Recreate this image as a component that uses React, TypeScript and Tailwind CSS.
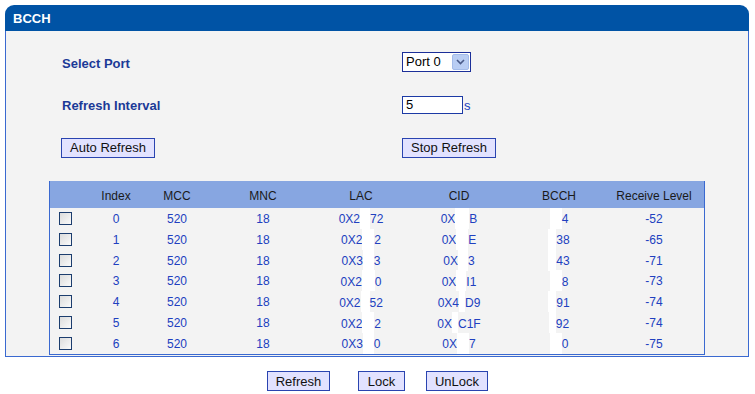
import React from "react";

type Row = {
  idx: number;
  lac: [string, string, number];
  cid: [string, string, number];
  bcch: [string, string, number];
  level: string;
};

// values partly blanked out in the capture: [before, after, gap width]
const ROWS: Row[] = [
  { idx: 0, lac: ["0X2", "72", 10], cid: ["0X", "B", 14], bcch: ["", "4", 12], level: "-52" },
  { idx: 1, lac: ["0X2", "2", 12], cid: ["0X", "E", 12], bcch: ["", "38", 8], level: "-65" },
  { idx: 2, lac: ["0X3", "3", 11], cid: ["0X", "3", 10], bcch: ["", "43", 8], level: "-71" },
  { idx: 3, lac: ["0X2", "0", 13], cid: ["0X", "I1", 10], bcch: ["", "8", 12], level: "-73" },
  { idx: 4, lac: ["0X2", "52", 9], cid: ["0X4", "D9", 6], bcch: ["", "91", 8], level: "-74" },
  { idx: 5, lac: ["0X2", "2", 12], cid: ["0X", "C1F", 6], bcch: ["", "92", 7], level: "-74" },
  { idx: 6, lac: ["0X3", "0", 11], cid: ["0X", "7", 12], bcch: ["", "0", 12], level: "-75" },
];

function Masked({ v }: { v: [string, string, number] }) {
  return (
    <span className="inline-flex items-center h-[21px]">
      <span className="pt-[2px]">{v[0]}</span>
      <span className="inline-block h-[21px] bg-white" style={{ width: v[2] }} />
      <span className="pt-[2px]">{v[1]}</span>
    </span>
  );
}

function Btn({ label, w }: { label: string; w: string }) {
  return (
    <button
      className={`h-[20px] ${w} border border-[#2a44b0] bg-[#e2e2ff] text-[13px] leading-none text-[#111] flex items-center justify-center`}
    >
      {label}
    </button>
  );
}

export default function App() {
  return (
    <div className="w-[755px] h-[394px] bg-white font-['Liberation_Sans',Arial,sans-serif] pt-[5px] pl-[5px]">
      <div className="w-[744px]">
        <div className="h-[26px] bg-[#0053a5] rounded-t-[9px] flex items-center pl-[8px] pt-[1px]">
          <span className="text-white text-[13px] font-bold">BCCH</span>
        </div>
        <div className="h-[326px] bg-[#f3f3f3] border-x border-b border-[#3a69d0] pt-[21px]">
          <div className="flex items-center h-[20px]">
            <div className="w-[396px] pl-[56px] pt-[3px] text-[13px] font-bold text-[#1b3a97]">Select Port</div>
            <div className="w-[69px] h-[20px] border border-[#1c2f99] bg-white flex items-center justify-between pl-[3px] pr-[1px]">
              <span className="text-[13px] text-black">Port 0</span>
              <span className="w-[17px] h-[16px] bg-[#b9cdf3] border border-[#a3bbe9] rounded-[2px] flex items-center justify-center">
                <svg width="9" height="6" viewBox="0 0 9 6">
                  <path d="M1 1 L4.5 4.5 L8 1" stroke="#4a5a88" strokeWidth="1.6" fill="none" />
                </svg>
              </span>
            </div>
          </div>
          <div className="flex items-center h-[18px] mt-[24px]">
            <div className="w-[396px] pl-[56px] pt-[2px] text-[13px] font-bold text-[#1b3a97]">Refresh Interval</div>
            <div className="w-[61px] h-[18px] border border-[#1c3aa5] bg-white flex items-center pl-[3px] text-[13px] text-black">5</div>
            <span className="ml-[1px] pt-[2px] text-[13px] text-[#2040c0]">s</span>
          </div>
          <div className="flex items-center h-[19px] mt-[24px]">
            <div className="w-[396px] pl-[55px]">
              <Btn label="Auto Refresh" w="w-[94px] h-[19px]" />
            </div>
            <Btn label="Stop Refresh" w="w-[94px] h-[19px]" />
          </div>
          <div className="ml-[43px] mt-[24px] w-[656px] border-x border-b border-[#3a69d0] text-[12px]">
            <div className="flex h-[27px] items-center pt-[2px] bg-[#87a6e1] text-[#1a1a1a]">
              <div className="w-[36px]" />
              <div className="w-[60px] text-center">Index</div>
              <div className="w-[62px] text-center">MCC</div>
              <div className="w-[110px] text-center">MNC</div>
              <div className="w-[86px] text-center">LAC</div>
              <div className="w-[110px] text-center">CID</div>
              <div className="w-[90px] text-center">BCCH</div>
              <div className="w-[100px] text-center">Receive Level</div>
            </div>
            {ROWS.map((r) => (
              <div key={r.idx} className="flex h-[20.85px] items-center text-[#2040c0]">
                <div className="w-[36px] pl-[9px] flex items-center">
                  <span className="w-[13px] h-[13px] border border-[#1c3d6e] bg-gradient-to-br from-[#dcdcdc] to-[#fafafa]" />
                </div>
                <div className="w-[60px] text-center pt-[1px]">{r.idx}</div>
                <div className="w-[62px] text-center pt-[1px]">520</div>
                <div className="w-[110px] text-center pt-[1px]">18</div>
                <div className="w-[86px] flex justify-center">
                  <Masked v={r.lac} />
                </div>
                <div className="w-[110px] flex justify-center">
                  <Masked v={r.cid} />
                </div>
                <div className="w-[90px] flex justify-center">
                  <Masked v={r.bcch} />
                </div>
                <div className="w-[100px] text-center pt-[1px]">{r.level}</div>
              </div>
            ))}
          </div>
        </div>
      </div>
      <div className="flex justify-center mt-[14px] pr-[5px]">
        <Btn label="Refresh" w="w-[63px]" />
        <div className="ml-[28px]">
          <Btn label="Lock" w="w-[47px]" />
        </div>
        <div className="ml-[21px]">
          <Btn label="UnLock" w="w-[62px]" />
        </div>
      </div>
    </div>
  );
}
